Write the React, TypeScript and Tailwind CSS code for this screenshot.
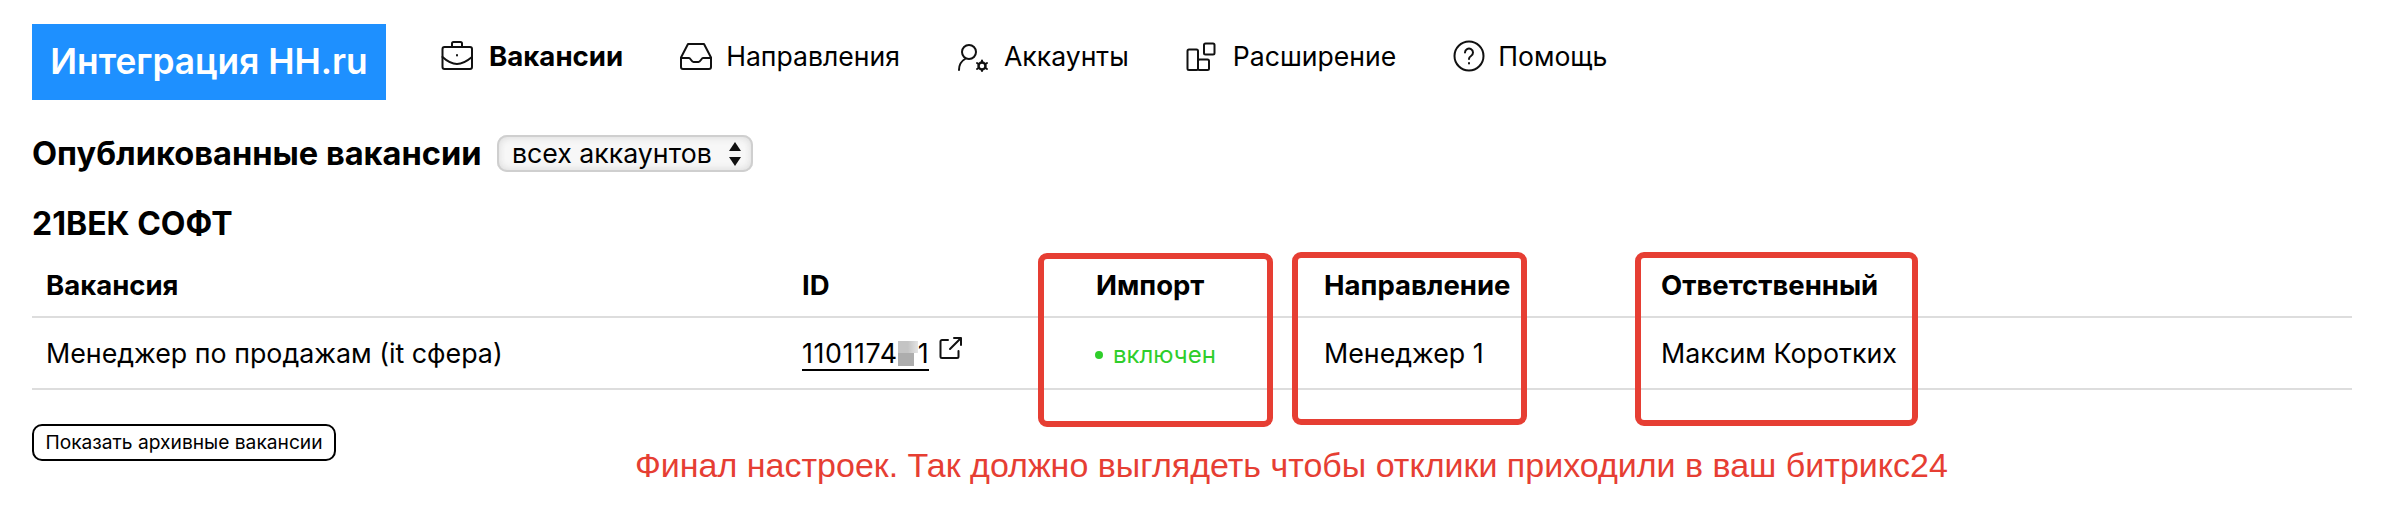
import React from "react";

const stroke = { fill: "none", stroke: "#111", strokeWidth: 2, strokeLinejoin: "round" as const, strokeLinecap: "round" as const };

const Briefcase = () => (
  <svg width="32" height="32" viewBox="0 0 32 32" {...stroke}>
    <path d="M11 7V3.500A1.500 1.500 0 0 1 12.500 2h7A1.500 1.500 0 0 1 21 3.500V7" />
    <rect x="1.500" y="7" width="29.500" height="22" rx="2" />
    <path d="M1.500 17C7 22 12 24 16 24s9-2 15-7" />
    <path d="M16 15v.5" />
  </svg>
);
const Inbox = () => (
  <svg width="32" height="32" viewBox="0 0 32 32" {...stroke}>
    <path d="M8 4h16l7 13.500V27a2 2 0 0 1-2 2H3a2 2 0 0 1-2-2V17.500z" />
    <path d="M1 18h8c1.500 0 2.500 4 4.500 4h5c2 0 3-4 4.500-4h8" />
  </svg>
);
const UserGear = () => (
  <svg width="32" height="32" viewBox="0 0 32 32" {...stroke}>
    <circle cx="12" cy="12" r="7" />
    <path d="M2 30c0-5 2.500-9 6-11" />
    <circle cx="25" cy="26" r="3.500" strokeWidth="2.500" />
    <path d="M25 20.500v1.500M25 30v1M20 23l1.500 1M28.500 28l1.500 1M20 29l1.500-1M28.500 24l1.500-1" />
  </svg>
);
const Blocks = () => (
  <svg width="30" height="32" viewBox="0 0 30 32" {...stroke}>
    <rect x="1.500" y="9.500" width="10.500" height="20.500" rx="1.500" />
    <rect x="12" y="19.500" width="11" height="10.500" rx="1.500" />
    <rect x="18" y="3.500" width="10.500" height="11" rx="1.500" />
  </svg>
);
const Help = () => (
  <svg width="32" height="32" viewBox="0 0 32 32" {...stroke}>
    <circle cx="16" cy="16" r="14.500" />
    <path d="M12 12.500a4 4 0 1 1 6 3.500c-1.300.8-2 1.500-2 3" />
    <path d="M16 23v.5" />
  </svg>
);
const External = () => (
  <svg width="24" height="24" viewBox="0 0 24 24" fill="none" stroke="#111" strokeWidth="2" strokeLinecap="round" strokeLinejoin="round">
    <path d="M9 4H3a1.500 1.500 0 0 0-1.500 1.500v15A1.500 1.500 0 0 0 3 22h15a1.500 1.500 0 0 0 1.500-1.500V15" />
    <path d="M11 13L22 2M15 2h7v7" />
  </svg>
);

const nav = [
  { icon: <Briefcase />, label: "Вакансии", cls: "gap-[16px] font-bold text-[27.6px]" },
  { icon: <Inbox />, label: "Направления", cls: "gap-[14px]" },
  { icon: <UserGear />, label: "Аккаунты", cls: "gap-[15px]" },
  { icon: <Blocks />, label: "Расширение", cls: "gap-[17px]" },
  { icon: <Help />, label: "Помощь", cls: "gap-[13px]" },
];

export default function App() {
  return (
    <div className="relative h-[514px] w-[2390px] overflow-hidden bg-white pl-[32px] pr-[38px] pt-[24px] text-black [font-family:Inter,sans-serif]">
      <header className="flex h-[76px] items-center">
        <div className="flex h-[76px] w-[354px] items-center justify-center bg-[#1e90ff] text-[35.300px] font-semibold text-white">Интеграция HH.ru</div>
        <nav className="-mt-[12px] ml-[55px] flex items-center gap-[57px] text-[26.6px] leading-[32px]">
          {nav.map((n) => (
            <div key={n.label} className={`flex items-center ${n.cls}`}>
              {n.icon}
              <span>{n.label}</span>
            </div>
          ))}
        </nav>
      </header>

      <div className="mt-[35px] flex h-[37px] items-center">
        <h1 className="w-[465px] text-[32.6px] font-bold">Опубликованные вакансии</h1>
        <div className="flex h-[37px] w-[256px] items-center justify-between rounded-[10px] bg-[#f7f7f7] pl-[15px] pr-[12px] text-[26.7px] shadow-[inset_0_0_0_2px_#cfcfcf,inset_0_2px_8px_#dcdcdc,inset_0_-2px_8px_#dcdcdc]">
          <span>всех аккаунтов</span>
          <span className="flex flex-col gap-[6px]">
            <span className="h-0 w-0 border-x-[6px] border-b-[9px] border-x-transparent border-b-[#111]" />
            <span className="h-0 w-0 border-x-[6px] border-t-[9px] border-x-transparent border-t-[#111]" />
          </span>
        </div>
      </div>

      <h2 className="mt-[34px] h-[36px] text-[32px] font-bold leading-[36px]">21ВЕК СОФТ</h2>

      <table className="mt-[13px] w-full table-fixed border-collapse text-[26.8px]">
        <thead>
          <tr className="h-[62px] border-b-2 border-[#dddddd] text-left text-[27.5px]">
            <th className="w-[756px] pl-[14px] font-bold">Вакансия</th>
            <th className="w-[294px] pl-[14px] font-bold">ID</th>
            <th className="w-[228px] pl-[14px] font-bold">Импорт</th>
            <th className="w-[337px] pl-[14px] font-bold">Направление</th>
            <th className="pl-[14px] font-bold">Ответственный</th>
          </tr>
        </thead>
        <tbody>
          <tr className="h-[72px] border-b-2 border-[#dddddd]">
            <td className="pl-[14px]">Менеджер по продажам (it сфера)</td>
            <td className="pl-[14px]">
              <span className="inline-flex items-start gap-[10px]">
                <span className="flex h-[34px] items-center border-b-2 border-black">
                  <span className="tracking-[0.6px]">1101174</span>
                  <span className="flex h-[25px] w-[20px] flex-col">
                    <span className="h-[12px] w-full bg-gradient-to-r from-[#c4c4c4] via-[#c4c4c4] to-[#e4e4e4]" />
                    <span className="h-[13px] w-[16px] bg-[#adadad]" />
                  </span>
                  <span>1</span>
                </span>
                <span className="-mt-[1px]"><External /></span>
              </span>
            </td>
            <td className="pl-[13px] pt-[3px] text-[24px] text-[#2fce2b]">
              <span className="mr-[10px] inline-block h-[8px] w-[8px] rounded-full bg-[#2fce2b] align-[4px]" />
              <span>включен</span>
            </td>
            <td className="pl-[14px]">Менеджер 1</td>
            <td className="pl-[14px]">Максим Коротких</td>
          </tr>
        </tbody>
      </table>

      <button className="mt-[34px] flex h-[37px] w-[304px] items-center justify-center rounded-[10px] border-2 border-black bg-white text-[19.200px]">Показать архивные вакансии</button>

      <div className="absolute left-[1038px] top-[253px] h-[174px] w-[235px] rounded-[9px] border-[6px] border-[#e63e33]" />
      <div className="absolute left-[1292px] top-[252px] h-[173px] w-[235px] rounded-[9px] border-[6px] border-[#e63e33]" />
      <div className="absolute left-[1635px] top-[252px] h-[174px] w-[283px] rounded-[9px] border-[6px] border-[#e63e33]" />
      <div className="absolute left-[635px] top-[445px] text-[34px] leading-[40px] text-[#e63e33] [font-family:'Liberation_Sans',Arial,sans-serif]">Финал настроек. Так должно выглядеть чтобы отклики приходили в ваш битрикс24</div>
    </div>
  );
}
